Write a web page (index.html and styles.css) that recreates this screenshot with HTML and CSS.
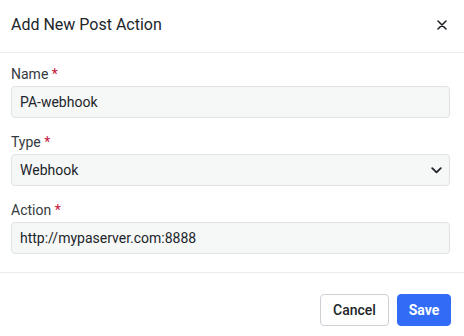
FILE: index.html
```html
<!DOCTYPE html>
<html>
<head>
<meta charset="utf-8">
<link rel="stylesheet" href="styles.css">
</head>
<body>
<div class="modal">
  <div class="modal-header">
    <h1 class="modal-title">Add New Post Action</h1>
    <button class="close-btn" aria-label="Close">
      <svg width="10" height="10" viewBox="0 0 10 10"><path d="M1 1L9 9M9 1L1 9" stroke="#1f2328" stroke-width="1.6" stroke-linecap="round"/></svg>
    </button>
  </div>
  <div class="modal-body">
    <div class="field">
      <label class="field-label">Name <span class="req">*</span></label>
      <div class="input">PA-webhook</div>
    </div>
    <div class="field">
      <label class="field-label">Type <span class="req">*</span></label>
      <div class="input select">
        <span>Webhook</span>
        <svg class="chev" width="11" height="7" viewBox="0 0 11 7"><path d="M1.2 1.2L5.5 5.3L9.8 1.2" fill="none" stroke="#1f2328" stroke-width="1.8" stroke-linecap="round" stroke-linejoin="round"/></svg>
      </div>
    </div>
    <div class="field">
      <label class="field-label">Action <span class="req">*</span></label>
      <div class="input">http://mypaserver.com:8888</div>
    </div>
  </div>
  <div class="modal-footer">
    <button class="btn btn-cancel">Cancel</button>
    <button class="btn btn-save">Save</button>
  </div>
</div>
</body>
</html>
```
FILE: styles.css
```css
* { box-sizing: border-box; }
html, body {
  margin: 0;
  padding: 0;
  background: #fff;
}
body {
  font-family: Roboto, "Liberation Sans", sans-serif;
  color: #212529;
  width: 464px;
  height: 336px;
  overflow: hidden;
}
.modal {
  display: flex;
  flex-direction: column;
}
.modal-header {
  height: 53px;
  border-bottom: 1px solid #e9ebee;
  display: flex;
  align-items: center;
  justify-content: space-between;
  padding: 0 14px 3px 11px;
}
.modal-title {
  margin: 0;
  font-size: 16px;
  font-weight: 400;
  color: #212529;
  line-height: 20px;
}
.close-btn {
  border: 0;
  background: transparent;
  padding: 0;
  width: 12px;
  height: 12px;
  display: flex;
  align-items: center;
  justify-content: center;
  margin-right: 2px;
}
.modal-body {
  padding: 11px 14px 18px 11px;
  border-bottom: 1px solid #e9ebee;
}
.field {
  display: flex;
  flex-direction: column;
  margin-bottom: 14px;
}
.field:last-child { margin-bottom: 0; }
.field-label {
  font-size: 14px;
  line-height: 20px;
  color: #343a40;
  margin-bottom: 2px;
}
.req { color: #c8143c; }
.input {
  height: 32px;
  border: 1px solid #dfe3e6;
  border-radius: 4px;
  background: #f6f8f8;
  padding: 0 8px;
  font-size: 14px;
  line-height: 30px;
  color: #212529;
}
.select {
  display: flex;
  align-items: center;
  justify-content: space-between;
  padding-right: 7px;
}
.chev { display: block; }
.modal-footer {
  display: flex;
  justify-content: flex-end;
  gap: 8px;
  padding: 21px 13px 10px 11px;
}
.btn {
  font-family: Roboto, "Liberation Sans", sans-serif;
  font-size: 14px;
  height: 32px;
  border-radius: 4px;
  padding: 0;
}
.btn-cancel {
  width: 69px;
  background: #fff;
  border: 1px solid #ccd1d6;
  color: #212529;
  font-weight: 500;
}
.btn-save {
  width: 54px;
  background: #326cf6;
  border: 1px solid #326cf6;
  color: #fff;
  font-weight: 700;
}
```
